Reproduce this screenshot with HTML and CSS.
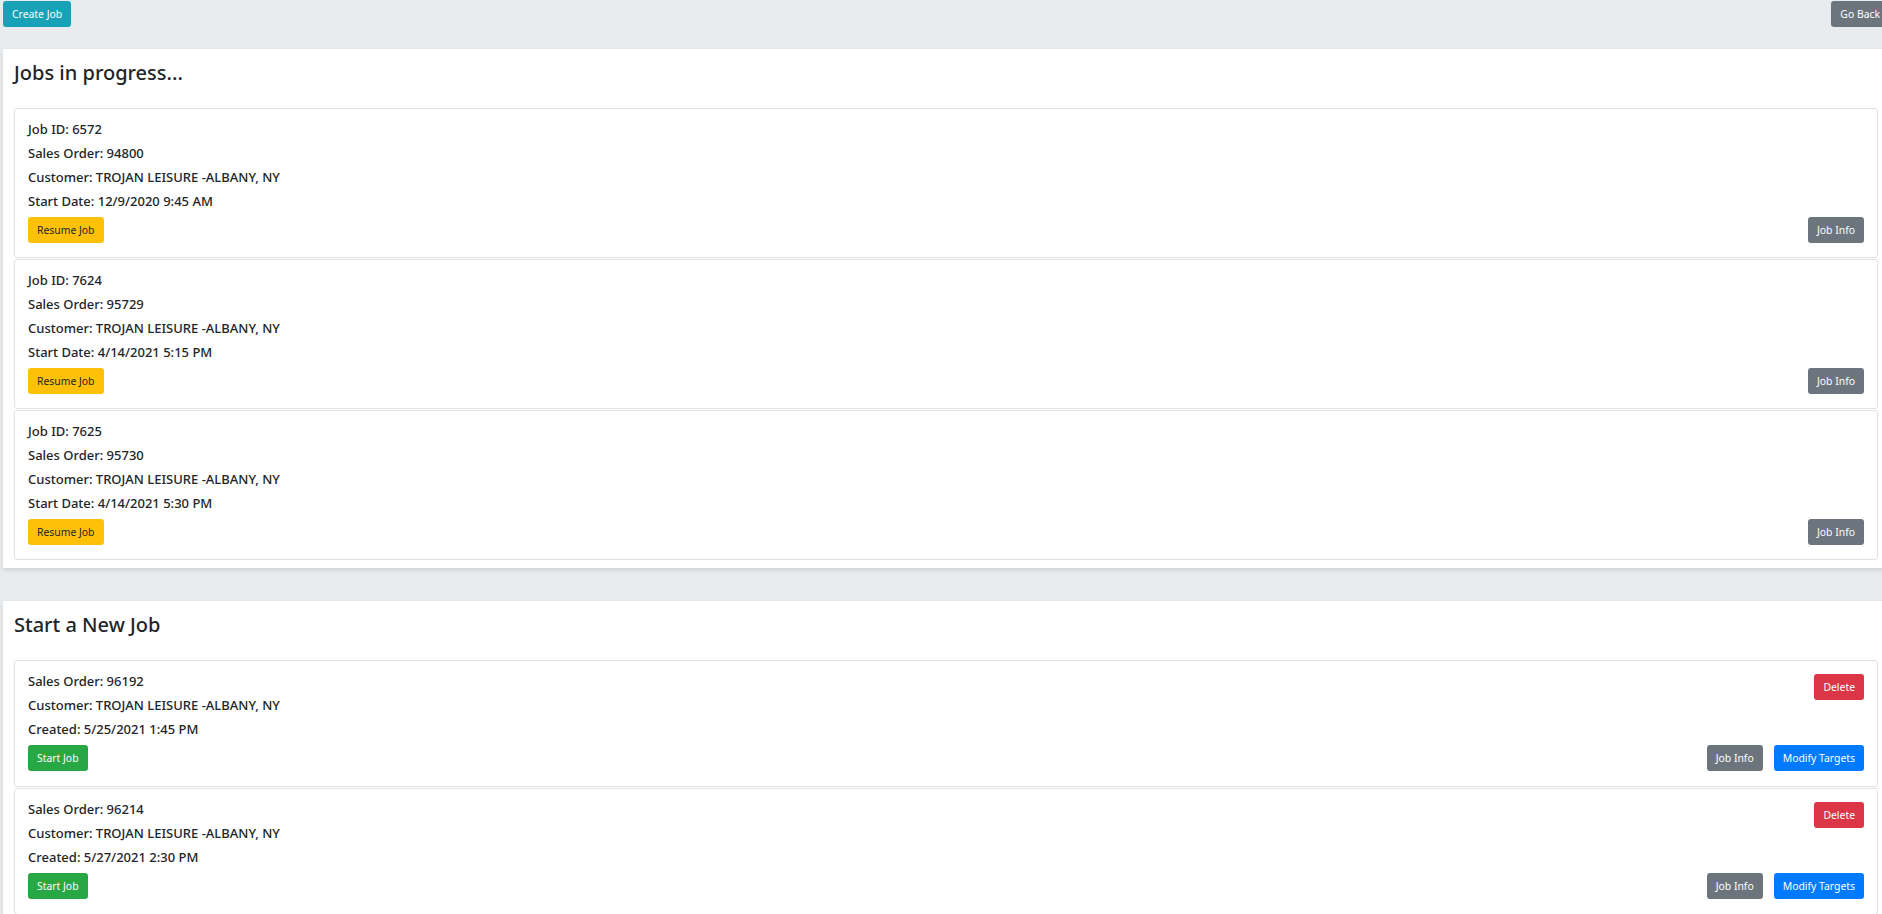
FILE: index.html
```html
<!DOCTYPE html>
<html>
<head>
<meta charset="utf-8">
<title>Jobs</title>
<link rel="stylesheet" href="styles.css">
</head>
<body>
<div class="page">
  <div class="topbar">
    <button class="btn btn-info">Create Job</button>
    <button class="btn btn-secondary">Go Back</button>
  </div>

  <section class="panel">
    <h2 class="panel-title">Jobs in progress...</h2>
    <div class="job-card">
      <p class="line">Job ID: 6572</p>
      <p class="line">Sales Order: 94800</p>
      <p class="line">Customer: TROJAN LEISURE -ALBANY, NY</p>
      <p class="line">Start Date: 12/9/2020 9:45 AM</p>
      <div class="actions">
        <button class="btn btn-warning">Resume Job</button>
        <button class="btn btn-secondary">Job Info</button>
      </div>
    </div>
    <div class="job-card">
      <p class="line">Job ID: 7624</p>
      <p class="line">Sales Order: 95729</p>
      <p class="line">Customer: TROJAN LEISURE -ALBANY, NY</p>
      <p class="line">Start Date: 4/14/2021 5:15 PM</p>
      <div class="actions">
        <button class="btn btn-warning">Resume Job</button>
        <button class="btn btn-secondary">Job Info</button>
      </div>
    </div>
    <div class="job-card">
      <p class="line">Job ID: 7625</p>
      <p class="line">Sales Order: 95730</p>
      <p class="line">Customer: TROJAN LEISURE -ALBANY, NY</p>
      <p class="line">Start Date: 4/14/2021 5:30 PM</p>
      <div class="actions">
        <button class="btn btn-warning">Resume Job</button>
        <button class="btn btn-secondary">Job Info</button>
      </div>
    </div>
  </section>

  <section class="panel panel-new">
    <h2 class="panel-title">Start a New Job</h2>
    <div class="job-card">
      <button class="btn btn-danger float-right">Delete</button>
      <p class="line">Sales Order: 96192</p>
      <p class="line">Customer: TROJAN LEISURE -ALBANY, NY</p>
      <p class="line">Created: 5/25/2021 1:45 PM</p>
      <div class="actions">
        <button class="btn btn-success">Start Job</button>
        <div class="right-group">
          <button class="btn btn-secondary">Job Info</button>
          <button class="btn btn-primary">Modify Targets</button>
        </div>
      </div>
    </div>
    <div class="job-card">
      <button class="btn btn-danger float-right">Delete</button>
      <p class="line">Sales Order: 96214</p>
      <p class="line">Customer: TROJAN LEISURE -ALBANY, NY</p>
      <p class="line">Created: 5/27/2021 2:30 PM</p>
      <div class="actions">
        <button class="btn btn-success">Start Job</button>
        <div class="right-group">
          <button class="btn btn-secondary">Job Info</button>
          <button class="btn btn-primary">Modify Targets</button>
        </div>
      </div>
    </div>
  </section>
</div>
</body>
</html>
```

FILE: styles.css
```css
html, body {
  margin: 0;
  padding: 0;
}
body {
  background: #e9ecef;
  font-family: "Noto Sans", "Open Sans", sans-serif;
  color: #212529;
  overflow: hidden;
}
.page {
  margin-left: 3px;
  width: 1886px;
}
.topbar {
  display: flex;
  justify-content: space-between;
  align-items: flex-start;
  padding-top: 1px;
}
.btn {
  box-sizing: border-box;
  display: inline-flex;
  align-items: center;
  justify-content: center;
  height: 26px;
  font-family: inherit;
  font-size: 10.4px;
  line-height: 16px;
  padding: 0 9px;
  border: 0;
  border-radius: 3px;
  color: #fff;
  cursor: pointer;
  margin: 0;
}
.btn-info { background: #17a2b8; }
.btn-secondary { background: #6c757d; }
.btn-warning { background: #ffc107; color: #212529; }
.btn-success { background: #28a745; }
.btn-danger { background: #dc3545; }
.btn-primary { background: #007bff; }

.panel {
  background: #fff;
  margin-top: 22px;
  padding: 12px 11px 8px;
  box-shadow: 0 2px 5px rgba(0, 0, 0, 0.12);
}
.panel-new {
  margin-top: 33px;
}
.panel-title {
  margin: 0 0 23px;
  font-size: 20px;
  line-height: 24px;
  font-weight: 500;
}
.job-card {
  border: 1px solid #dee2e6;
  border-radius: 3px;
  padding: 11px 13px 14px;
  margin-bottom: 1px;
}
.job-card:last-child {
  margin-bottom: 0;
}
.panel-new .job-card {
  padding-bottom: 15px;
}
.line {
  margin: 0 0 6px;
  font-size: 13px;
  line-height: 18px;
  font-weight: 500;
}
.actions {
  display: flex;
  justify-content: space-between;
  align-items: flex-end;
  padding-top: 1px;
}
.right-group {
  display: flex;
  gap: 11px;
}
.float-right {
  float: right;
  margin-top: 2px;
}
```
